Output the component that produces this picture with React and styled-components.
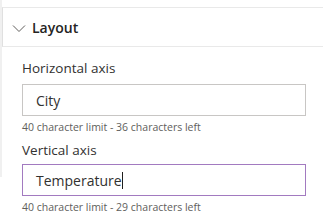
import React from 'react';
import styled, { createGlobalStyle } from 'styled-components';

const Global = createGlobalStyle`
  html, body {
    margin: 0;
    padding: 0;
    background: #ffffff;
  }
  body {
    font-family: "Open Sans", "Noto Sans", "Liberation Sans", sans-serif;
    color: #323130;
  }
`;

const Page = styled.div`
  display: flex;
  width: 323px;
  height: 223px;
  overflow: hidden;
`;

const Rail = styled.div`
  width: 2px;
  height: 177px;
  background: #f0f0f0;
  flex-shrink: 0;
`;

const Content = styled.div`
  flex: 1;
  padding-top: 7px;
`;

const Header = styled.div`
  display: flex;
  align-items: center;
  gap: 6px;
  height: 38px;
  padding-left: 9px;
  border-top: 1px solid #e9e9e9;
  border-bottom: 1px solid #e9e9e9;
  border-left: 1px solid #e0e0e0;
  font-size: 14px;
  font-weight: 600;
  color: #252423;
`;

const Chevron = styled.svg`
  width: 14px;
  height: 14px;
  margin-top: 1px;
`;

const Body = styled.div`
  padding: 11px 17px 0 20px;
`;

const Field = styled.div`
  display: flex;
  flex-direction: column;
  margin-bottom: ${p => p.gap || 0}px;
`;

const Label = styled.div`
  font-size: 13.5px;
  line-height: 20px;
  color: #323130;
  margin-bottom: ${p => p.space || 6}px;
`;

const TextBox = styled.div`
  display: flex;
  align-items: center;
  height: 30px;
  padding-left: 13px;
  border: 1px solid ${p => (p.focused ? '#a27ac0' : '#c8c6c4')};
  font-size: 14px;
  color: #323130;
`;

const Caret = styled.span`
  display: inline-block;
  width: 1px;
  height: 17px;
  background: #201f1e;
`;

const Hint = styled.div`
  font-size: 10.5px;
  line-height: 14px;
  margin-top: 4px;
  color: #605e5c;
`;

export default function App() {
  return (
    <Page>
      <Global />
      <Rail />
      <Content>
        <Header>
          <Chevron viewBox="0 0 14 14" fill="none">
            <path d="M1 4.5 L7 10.5 L13 4.5" stroke="#605e5c" strokeWidth="1" />
          </Chevron>
          Layout
        </Header>
        <Body>
          <Field gap={6}>
            <Label>Horizontal axis</Label>
            <TextBox>City</TextBox>
            <Hint>40 character limit - 36 characters left</Hint>
          </Field>
          <Field>
            <Label space={4}>Vertical axis</Label>
            <TextBox focused>
              Temperature
              <Caret />
            </TextBox>
            <Hint>40 character limit - 29 characters left</Hint>
          </Field>
        </Body>
      </Content>
    </Page>
  );
}
